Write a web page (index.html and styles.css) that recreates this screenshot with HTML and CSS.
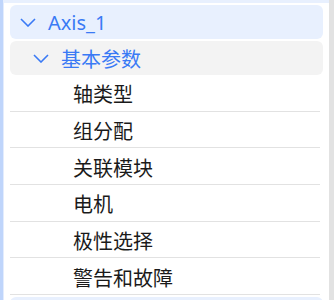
FILE: index.html
```html
<!DOCTYPE html>
<html lang="zh-CN">
<head>
    <meta charset="UTF-8">
    <meta name="viewport" content="width=device-width, initial-scale=1.0">
    <title>参数树</title>
    <link rel="stylesheet" href="styles.css">
</head>
<body>
    <div class="panel">
        <div class="tree">
            <div class="node node-axis">
                <svg class="chevron" width="16" height="9" viewBox="0 0 16 9"><path d="M1 1 L8 8 L15 1" fill="none" stroke="currentColor" stroke-width="1.6"/></svg>
                <span>Axis_1</span>
            </div>
            <div class="node node-group">
                <svg class="chevron" width="16" height="9" viewBox="0 0 16 9"><path d="M1 1 L8 8 L15 1" fill="none" stroke="currentColor" stroke-width="1.6"/></svg>
                <span>基本参数</span>
            </div>
            <ul class="leaves">
                <li>轴类型</li>
                <li>组分配</li>
                <li>关联模块</li>
                <li>电机</li>
                <li>极性选择</li>
                <li>警告和故障</li>
            </ul>
            <div class="node node-next"></div>
        </div>
        <div class="scrollbar"></div>
    </div>
</body>
</html>
```
FILE: styles.css
```css
* {
    box-sizing: border-box;
}
body {
    margin: 0;
    background-color: #fff;
    font-family: "Noto Sans", "Noto Sans CJK SC", sans-serif;
}
.panel {
    display: flex;
    height: 300px;
    overflow: hidden;
    border-left: 3px solid #bfd5fb;
}
.tree {
    flex: 1;
    padding: 5px 6px 0 6px;
    border-top: 3px solid #e8f0fe;
    border-left: 1px solid #e3ecfd;
}
.scrollbar {
    width: 5px;
    background-color: #e2e2e2;
}
.node {
    display: flex;
    align-items: center;
    height: 34px;
    border-radius: 6px;
    color: #3a7af5;
    font-size: 20px;
}
.node-axis {
    margin-top: -3px;
    padding-left: 10px;
    background-color: #e8f0fe;
}
.node-group {
    margin-top: 2px;
    padding-left: 23px;
    background-color: #f3f3f3;
}
.chevron {
    flex: none;
    margin-right: 12px;
}
.leaves {
    margin: 0;
    padding: 0;
    list-style-type: none;
}
.leaves li {
    height: 36.7px;
    display: flex;
    align-items: center;
    padding-left: 63px;
    padding-top: 2px;
    border-bottom: 1px solid #e2e2e2;
    margin-right: 3px;
    color: #1a1a1a;
    font-size: 20px;
    white-space: nowrap;
}
.node-next {
    margin-top: 2px;
    background-color: #e8f0fe;
}
```
